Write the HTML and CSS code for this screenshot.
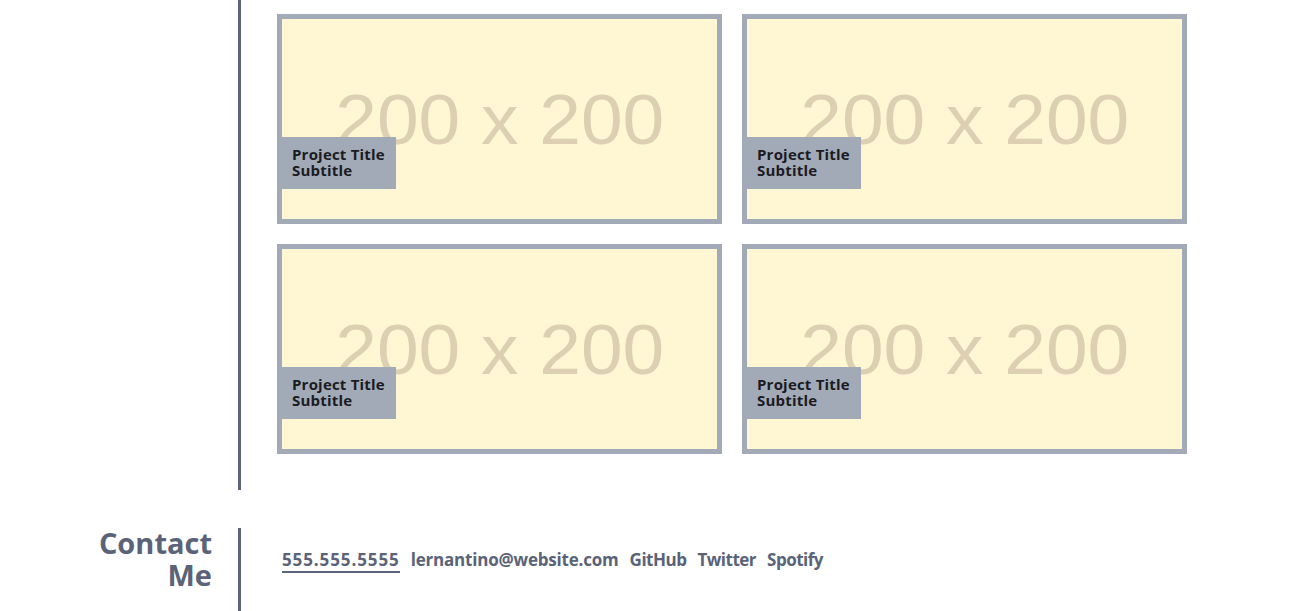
FILE: index.html
```html
<!DOCTYPE html>
<html lang="en">
<head>
<meta charset="utf-8">
<title>Portfolio</title>
<link rel="stylesheet" href="styles.css">
</head>
<body>
<section class="section work">
  <div class="side"></div>
  <div class="main">
    <div class="grid">
      <article class="card">
        <div class="ph">200 x 200</div>
        <div class="label"><h3>Project Title</h3><p>Subtitle</p></div>
      </article>
      <article class="card">
        <div class="ph">200 x 200</div>
        <div class="label"><h3>Project Title</h3><p>Subtitle</p></div>
      </article>
      <article class="card">
        <div class="ph">200 x 200</div>
        <div class="label"><h3>Project Title</h3><p>Subtitle</p></div>
      </article>
      <article class="card">
        <div class="ph">200 x 200</div>
        <div class="label"><h3>Project Title</h3><p>Subtitle</p></div>
      </article>
    </div>
  </div>
</section>
<section class="section contact">
  <div class="side"><h2>Contact<br>Me</h2></div>
  <div class="main">
    <ul class="links">
      <li><a class="active phone" href="#">555.555.5555</a></li>
      <li><a href="#">lernantino@website.com</a></li>
      <li><a class="tight" href="#">GitHub</a></li>
      <li><a class="tight" href="#">Twitter</a></li>
      <li><a class="tight" href="#">Spotify</a></li>
    </ul>
  </div>
</section>
</body>
</html>
```
FILE: styles.css
```css
* { box-sizing: border-box; }
html, body { margin: 0; padding: 0; background: #fff; }
body { font-family: "Open Sans", "DejaVu Sans", sans-serif; color: #5a6378; overflow: hidden; }

.section { display: flex; }
.side {
  width: 241px;
  flex: none;
  border-right: 3px solid #5b6379;
  padding-right: 26px;
  text-align: right;
}
.main { flex: 1; }

.work .main { padding: 14px 0 36px 36px; }
.grid {
  display: grid;
  grid-template-columns: 445px 445px;
  gap: 20px;
}
.card {
  position: relative;
  height: 210px;
  border: 5px solid #a2aab8;
  background: #fff6d3;
  display: flex;
  align-items: center;
  justify-content: center;
  overflow: hidden;
}
.ph {
  font-family: "Liberation Sans", Arial, sans-serif;
  font-size: 70px;
  color: #ddcfb2;
  transform: scaleX(1.07);
  line-height: 1;
  padding-top: 1px;
}
.label {
  position: absolute;
  left: 0;
  bottom: 30px;
  width: 114px;
  height: 52px;
  background: #a2aab8;
  padding: 9px 10px;
  color: #1b1b22;
  font-size: 15px;
  line-height: 16px;
  font-weight: 700;
  letter-spacing: 0.2px;
  white-space: nowrap;
}
.label h3, .label p { margin: 0; font-size: inherit; font-weight: inherit; }

.contact { margin-top: 38px; }
.contact .side { min-height: 120px; }
.contact h2 {
  margin: 0;
  font-size: 29px;
  line-height: 32px;
  font-weight: 700;
  color: #5a6378;
  margin-top: -1px;
}
.links {
  list-style: none;
  margin: 0;
  padding: 21px 0 0 41px;
  display: flex;
  gap: 11px;
}
.links a {
  color: #5a6378;
  text-decoration: none;
  font-size: 17px;
  font-weight: 700;
  line-height: 22px;
  display: block;
  letter-spacing: -0.2px;
}
.links a.tight { letter-spacing: -0.5px; }
.links a.phone { letter-spacing: 0.9px; }
.links a.active { border-bottom: 2px solid #5a6378; }
```
